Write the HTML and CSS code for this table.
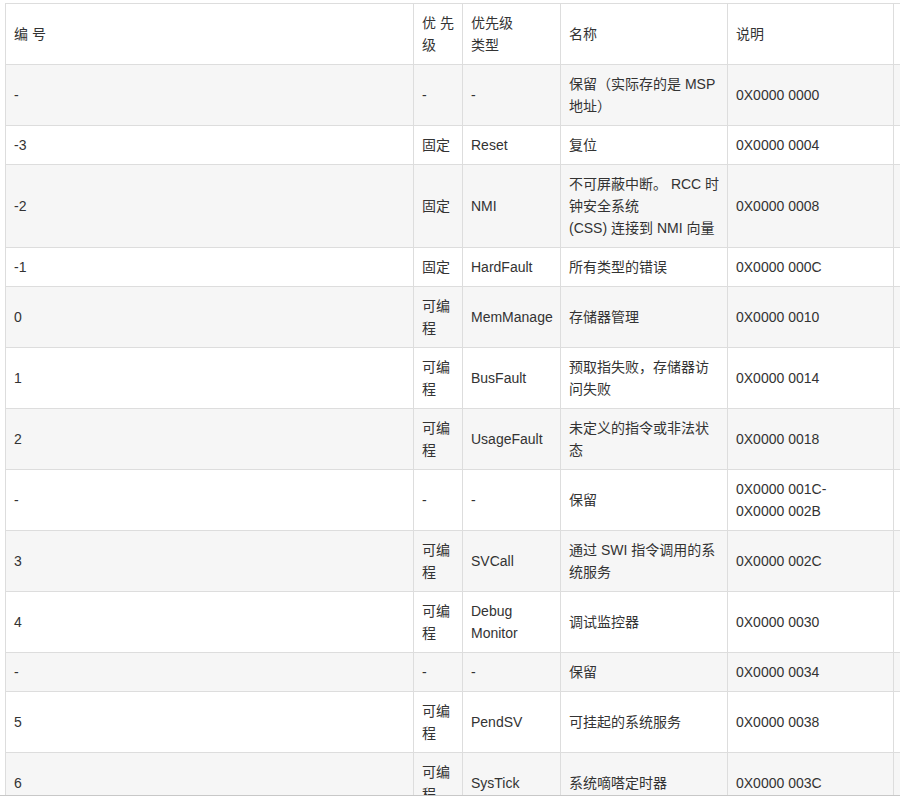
FILE: index.html
```html
<!DOCTYPE html>
<html lang="zh-CN">
<head>
<meta charset="utf-8">
<title>中断向量表</title>
<link rel="stylesheet" href="styles.css">
</head>
<body>
<div class="frame">
<table class="vt">
<colgroup>
<col class="c1"><col class="c2"><col class="c3"><col class="c4"><col class="c5"><col class="c6">
</colgroup>
<thead>
<tr><th>编 号</th><th>优 先<br>级</th><th>优先级<br>类型</th><th>名称</th><th>说明</th><th></th></tr>
</thead>
<tbody>
<tr><td>-</td><td>-</td><td>-</td><td>保留（实际存的是 MSP<br>地址）</td><td>0X0000 0000</td><td></td></tr>
<tr><td>-3</td><td>固定</td><td>Reset</td><td>复位</td><td>0X0000 0004</td><td></td></tr>
<tr><td>-2</td><td>固定</td><td>NMI</td><td>不可屏蔽中断。 RCC 时<br>钟安全系统<br>(CSS) 连接到 NMI 向量</td><td>0X0000 0008</td><td></td></tr>
<tr><td>-1</td><td>固定</td><td>HardFault</td><td>所有类型的错误</td><td>0X0000 000C</td><td></td></tr>
<tr><td>0</td><td>可编<br>程</td><td>MemManage</td><td>存储器管理</td><td>0X0000 0010</td><td></td></tr>
<tr><td>1</td><td>可编<br>程</td><td>BusFault</td><td>预取指失败，存储器访<br>问失败</td><td>0X0000 0014</td><td></td></tr>
<tr><td>2</td><td>可编<br>程</td><td>UsageFault</td><td>未定义的指令或非法状<br>态</td><td>0X0000 0018</td><td></td></tr>
<tr><td>-</td><td>-</td><td>-</td><td>保留</td><td>0X0000 001C-<br>0X0000 002B</td><td></td></tr>
<tr><td>3</td><td>可编<br>程</td><td>SVCall</td><td>通过 SWI 指令调用的系<br>统服务</td><td>0X0000 002C</td><td></td></tr>
<tr><td>4</td><td>可编<br>程</td><td>Debug<br>Monitor</td><td>调试监控器</td><td>0X0000 0030</td><td></td></tr>
<tr><td>-</td><td>-</td><td>-</td><td>保留</td><td>0X0000 0034</td><td></td></tr>
<tr><td>5</td><td>可编<br>程</td><td>PendSV</td><td>可挂起的系统服务</td><td>0X0000 0038</td><td></td></tr>
<tr><td>6</td><td>可编<br>程</td><td>SysTick</td><td>系统嘀嗒定时器</td><td>0X0000 003C</td><td></td></tr>
</tbody>
</table>
</div>
</body>
</html>
```
FILE: styles.css
```css
html, body {
  margin: 0;
  padding: 0;
  background: #fff;
}
.frame {
  box-sizing: border-box;
  width: 900px;
  height: 796px;
  padding: 3px 0 0 5px;
  border-bottom: 1px solid #c8c8c8;
  overflow: hidden;
}
.vt {
  border-collapse: collapse;
  table-layout: fixed;
  width: 1000px;
  font-family: "Liberation Sans", Arial, "Noto Sans CJK SC", sans-serif;
  font-size: 14px;
  line-height: 22px;
  color: #333;
}
.c1 { width: 408px; }
.c2 { width: 49px; }
.c3 { width: 98px; }
.c4 { width: 167px; }
.c5 { width: 166px; }
.c6 { width: 112px; }
.vt th, .vt td {
  border: 1px solid #ddd;
  padding: 8px;
  text-align: left;
  vertical-align: middle;
  font-weight: normal;
  white-space: nowrap;
  overflow: hidden;
}
.vt tbody tr:nth-child(odd) td {
  background: #f6f6f6;
}
```
